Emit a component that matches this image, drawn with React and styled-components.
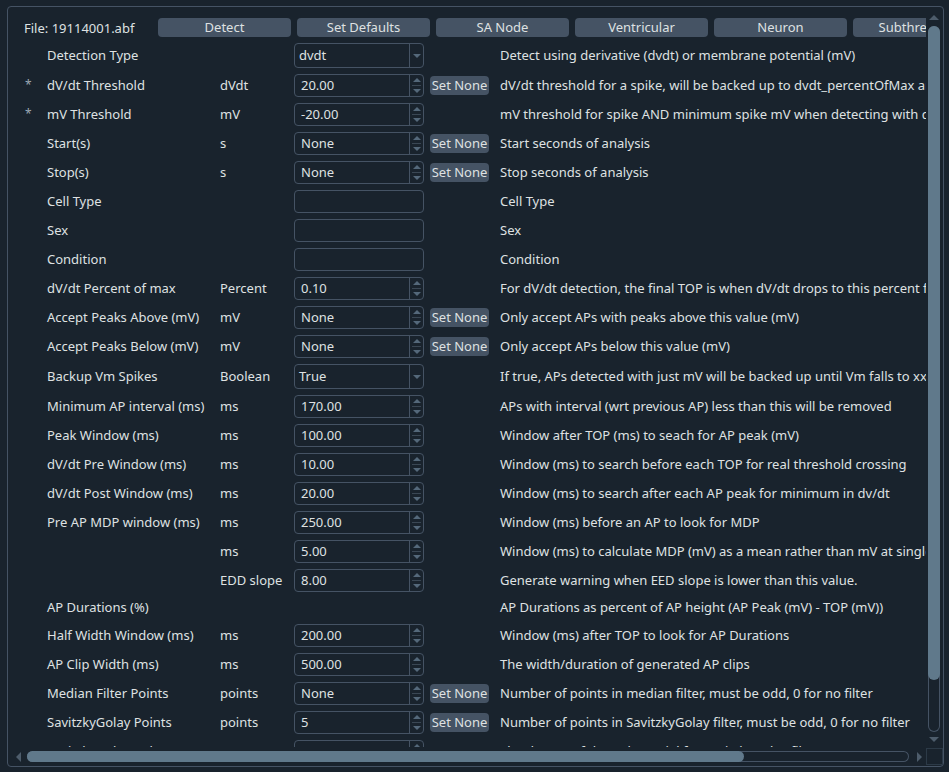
import styled, { createGlobalStyle } from "styled-components"

const GlobalStyle = createGlobalStyle`
body{
    margin: 0;
    background: #19232D;
    font-family: "Noto Sans", "DejaVu Sans", sans-serif;
    font-size: 13px;
    color: #DFE1E2;
}
`

const Frame = styled.div`
box-sizing: border-box;
margin: 6px 0 0 7px;
width: 937px;
height: 761px;
border: 1px solid #455364;
border-radius: 4px;
display: grid;
grid-template-columns: 918px 17px;
grid-template-rows: 740px 19px;
overflow: hidden;
`

const Viewport = styled.div`
overflow: hidden;
padding: 11px 0 0 16px;
display: flex;
flex-direction: column;
gap: 6px;

    & > *{
        flex-shrink: 0;
    }
`

const Header = styled.div`
display: flex;
align-items: center;
gap: 6px;
height: 19px;
white-space: nowrap;
`

const FileLabel = styled.span`
flex: none;
width: 128px;
`

const Button = styled.div`
flex: none;
box-sizing: border-box;
width: ${({ $w }) => $w || 133}px;
height: 19px;
line-height: 19px;
background: #455364;
border-radius: 4px;
text-align: center;
color: #DFE1E2;
overflow: hidden;
`

const Row = styled.div`
display: grid;
grid-template-columns: 17px 167px 68px 130px 64px max-content;
column-gap: 6px;
align-items: center;
min-height: 19px;
white-space: nowrap;
`

const Cell = styled.span`
padding-bottom: 2px;
`

const Star = styled(Cell)`
color: #9DA9B5;
font-size: 12px;
padding-left: 1px;
`

const Field = styled.div`
box-sizing: border-box;
height: ${({ $combo }) => $combo ? 25 : 23}px;
border: 1px solid #455364;
border-radius: 4px;
display: flex;
align-items: stretch;
`

const FieldText = styled.div`
flex: 1;
display: flex;
align-items: center;
padding-left: ${({ $combo }) => $combo ? 4 : 6}px;
padding-bottom: 1px;
`

const Side = styled.div`
width: 13px;
border-left: 1px solid #455364;
display: flex;
flex-direction: column;
align-items: center;
justify-content: center;
`

const Half = styled.div`
flex: 1;
width: 100%;
display: flex;
align-items: center;
justify-content: center;
& + &{
    border-top: 1px solid #3a4754;
    margin: 0 2px;
    width: auto;
    align-self: stretch;
}
`

const Tri = styled.div`
width: 0;
height: 0;
border-left: 4px solid transparent;
border-right: 4px solid transparent;
${({ $up }) => $up ? "border-bottom: 4px solid #54687A;" : "border-top: 4px solid #54687A;"}
`

const VBar = styled.div`
display: flex;
flex-direction: column;
align-items: center;
padding: 8px 2px 5px 0;
`

const HBar = styled.div`
display: flex;
align-items: center;
padding: 0 4px 0 8px;
`

const Arrow = styled.div`
flex: none;
width: 0;
height: 0;
${({ $dir }) => ({
    up: "border-left: 5px solid transparent; border-right: 5px solid transparent; border-bottom: 5px solid #4d5c6b; margin-bottom: 6px;",
    down: "border-left: 5px solid transparent; border-right: 5px solid transparent; border-top: 5px solid #4d5c6b; margin-top: 5px;",
    left: "border-top: 5px solid transparent; border-bottom: 5px solid transparent; border-right: 5px solid #4d5c6b; margin-right: 6px;",
    right: "border-top: 5px solid transparent; border-bottom: 5px solid transparent; border-left: 5px solid #4d5c6b; margin-left: 8px;",
})[$dir]}
`

const Track = styled.div`
flex: 1;
box-shadow: inset 0 0 0 1px #455364;
border-radius: 6px;
display: flex;
${({ $vertical }) => $vertical ? "width: 12px; flex-direction: column;" : "height: 11px;"}
`

const Handle = styled.div`
background: #60798B;
border-radius: 6px;
`

const Corner = styled.div`
margin: 1px 0 1px 0;
border: 1px solid #2c3a47;
`

const rows = [
    { label: "Detection Type", kind: "combo", value: "dvdt", desc: "Detect using derivative (dvdt) or membrane potential (mV)" },
    { star: true, label: "dV/dt Threshold", unit: "dVdt", kind: "spin", value: "20.00", none: true, desc: "dV/dt threshold for a spike, will be backed up to dvdt_percentOfMax and have TOP detected" },
    { star: true, label: "mV Threshold", unit: "mV", kind: "spin", value: "-20.00", desc: "mV threshold for spike AND minimum spike mV when detecting with dV/dt" },
    { label: "Start(s)", unit: "s", kind: "spin", value: "None", none: true, desc: "Start seconds of analysis" },
    { label: "Stop(s)", unit: "s", kind: "spin", value: "None", none: true, desc: "Stop seconds of analysis" },
    { label: "Cell Type", kind: "edit", value: "", desc: "Cell Type" },
    { label: "Sex", kind: "edit", value: "", desc: "Sex" },
    { label: "Condition", kind: "edit", value: "", desc: "Condition" },
    { label: "dV/dt Percent of max", unit: "Percent", kind: "spin", value: "0.10", desc: "For dV/dt detection, the final TOP is when dV/dt drops to this percent from dV/dt AP peak" },
    { label: "Accept Peaks Above (mV)", unit: "mV", kind: "spin", value: "None", none: true, desc: "Only accept APs with peaks above this value (mV)" },
    { label: "Accept Peaks Below (mV)", unit: "mV", kind: "spin", value: "None", none: true, desc: "Only accept APs below this value (mV)" },
    { label: "Backup Vm Spikes", unit: "Boolean", kind: "combo", value: "True", desc: "If true, APs detected with just mV will be backed up until Vm falls to xxx" },
    { label: "Minimum AP interval (ms)", unit: "ms", kind: "spin", value: "170.00", desc: "APs with interval (wrt previous AP) less than this will be removed" },
    { label: "Peak Window (ms)", unit: "ms", kind: "spin", value: "100.00", desc: "Window after TOP (ms) to seach for AP peak (mV)" },
    { label: "dV/dt Pre Window (ms)", unit: "ms", kind: "spin", value: "10.00", desc: "Window (ms) to search before each TOP for real threshold crossing" },
    { label: "dV/dt Post Window (ms)", unit: "ms", kind: "spin", value: "20.00", desc: "Window (ms) to search after each AP peak for minimum in dv/dt" },
    { label: "Pre AP MDP window (ms)", unit: "ms", kind: "spin", value: "250.00", desc: "Window (ms) before an AP to look for MDP" },
    { label: "", unit: "ms", kind: "spin", value: "5.00", desc: "Window (ms) to calculate MDP (mV) as a mean rather than mV at single point" },
    { label: "", unit: "EDD slope", kind: "spin", value: "8.00", desc: "Generate warning when EED slope is lower than this value." },
    { label: "AP Durations (%)", desc: "AP Durations as percent of AP height (AP Peak (mV) - TOP (mV))" },
    { label: "Half Width Window (ms)", unit: "ms", kind: "spin", value: "200.00", desc: "Window (ms) after TOP to look for AP Durations" },
    { label: "AP Clip Width (ms)", unit: "ms", kind: "spin", value: "500.00", desc: "The width/duration of generated AP clips" },
    { label: "Median Filter Points", unit: "points", kind: "spin", value: "None", none: true, desc: "Number of points in median filter, must be odd, 0 for no filter" },
    { label: "SavitzkyGolay Points", unit: "points", kind: "spin", value: "5", none: true, desc: "Number of points in SavitzkyGolay filter, must be odd, 0 for no filter" },
    { label: "SavitzkyGolay Poly Deg", unit: "", kind: "spin", value: "2", desc: "The degree of the polynomial for SavitzkyGolay filter" },
]

const presets = ["Detect", "Set Defaults", "SA Node", "Ventricular", "Neuron", "Subthreshold"]

function Input({ kind, value }) {
    if (!kind) return <span />
    return <Field $combo={kind === "combo"}>
        <FieldText $combo={kind === "combo"}>{value}</FieldText>
        {kind === "combo" && <Side><Tri /></Side>}
        {kind === "spin" && <Side>
            <Half><Tri $up /></Half>
            <Half><Tri /></Half>
        </Side>}
    </Field>
}

export default function App() {
    return <>
        <GlobalStyle />
        <Frame>
            <Viewport>
                <Header>
                    <FileLabel>File: 19114001.abf</FileLabel>
                    {presets.map(p => <Button key={p}>{p}</Button>)}
                </Header>

                {rows.map((r, i) => <Row key={i}>
                    <Star>{r.star ? "*" : ""}</Star>
                    <Cell>{r.label}</Cell>
                    <Cell>{r.unit}</Cell>
                    <Input kind={r.kind} value={r.value} />
                    {r.none ? <Button $w={59}>Set None</Button> : <span />}
                    <Cell>{r.desc}</Cell>
                </Row>)}
            </Viewport>

            <VBar>
                <Arrow $dir="up" />
                <Track $vertical>
                    <Handle style={{ height: "92.6%" }} />
                </Track>
                <Arrow $dir="down" />
            </VBar>

            <HBar>
                <Arrow $dir="left" />
                <Track>
                    <Handle style={{ width: "81.3%" }} />
                </Track>
                <Arrow $dir="right" />
            </HBar>
            <Corner />
        </Frame>
    </>
}
